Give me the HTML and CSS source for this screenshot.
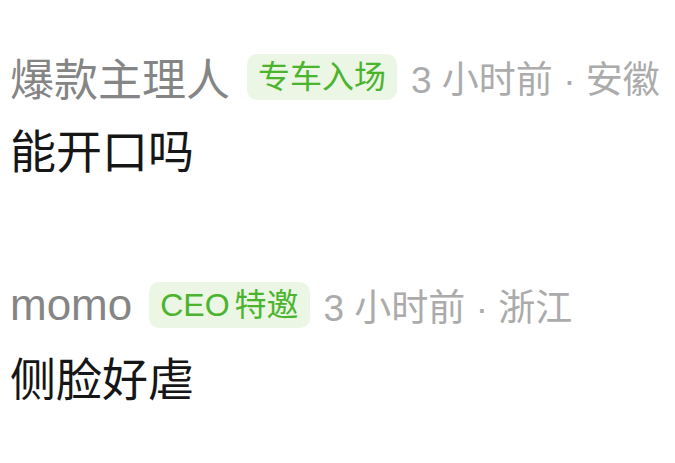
FILE: index.html
```html
<!DOCTYPE html>
<html lang="zh-CN">

<head>
    <meta charset="UTF-8">
    <meta name="viewport" content="width=device-width, initial-scale=1.0">
    <title>评论</title>
    <link rel="stylesheet" href="styles.css">
</head>

<body>
    <div class="comment-list">
        <div class="comment">
            <div class="comment-head">
                <span class="user-name">爆款主理人</span>
                <span class="user-tag">专车入场</span>
                <span class="comment-meta">3 小时前 · 安徽</span>
            </div>
            <p class="comment-text">能开口吗</p>
        </div>

        <div class="comment">
            <div class="comment-head">
                <span class="user-name">momo</span>
                <span class="user-tag">CEO 特邀</span>
                <span class="comment-meta">3 小时前 · 浙江</span>
            </div>
            <p class="comment-text">侧脸好虐</p>
        </div>
    </div>
</body>

</html>
```

FILE: styles.css
```css
* {
    margin: 0;
    padding: 0;
    box-sizing: border-box;
}

body {
    font-family: 'Liberation Sans', 'Noto Sans CJK SC', sans-serif;
    background: #fff;
    color: #111;
}

.comment-list {
    display: flex;
    flex-direction: column;
    gap: 101px;
    padding: 53px 10px 0;
}

.comment-head {
    display: flex;
    align-items: center;
    height: 48px;
    margin-bottom: 23px;
    white-space: nowrap;
}

.user-name {
    font-size: 44px;
    color: #858585;
}

.user-tag {
    margin-left: 17px;
    padding: 0 11px;
    height: 46px;
    line-height: 46px;
    font-size: 32px;
    color: #4bb42d;
    background: #ebf6e5;
    border-radius: 10px;
    word-spacing: -4px;
}

.comment-meta {
    margin-left: 14px;
    font-size: 37px;
    color: #ababab;
}

.comment-text {
    font-size: 46px;
    line-height: 56px;
    color: #161616;
}
```
